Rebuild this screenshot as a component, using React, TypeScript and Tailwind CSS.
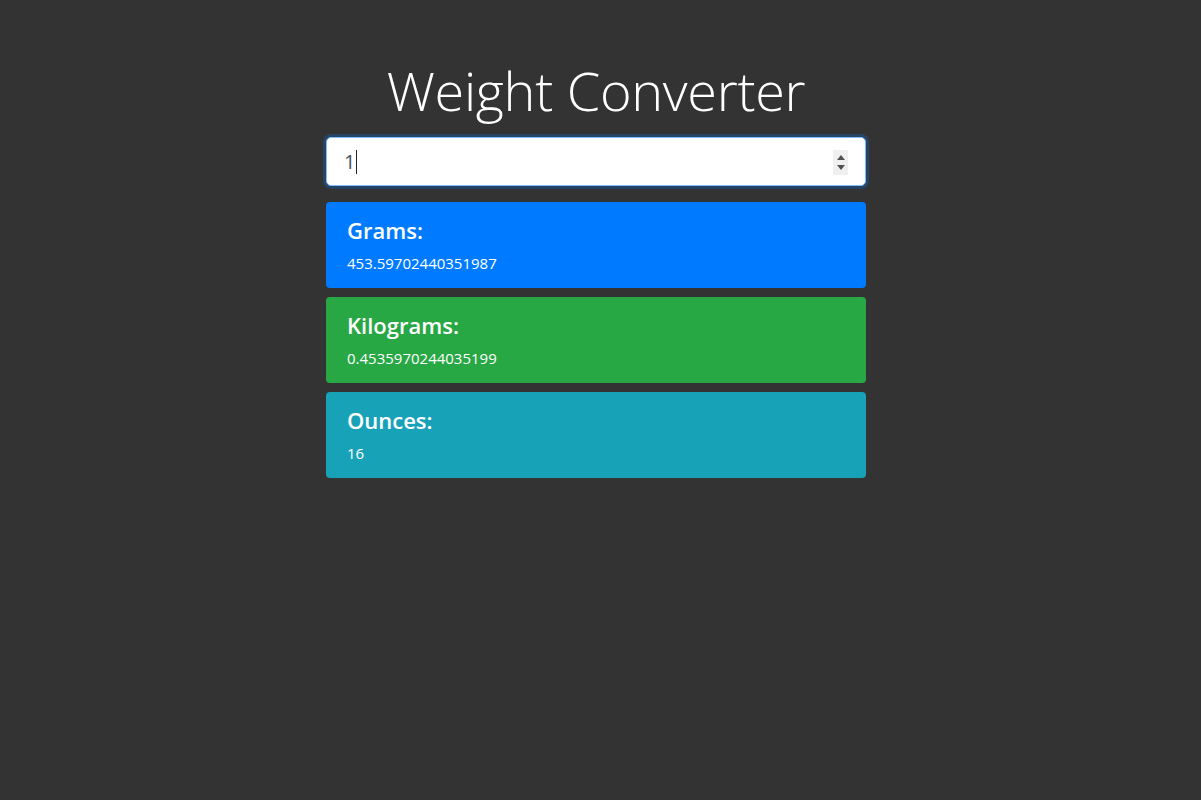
import React from 'react'

const results = [
  {label: 'Grams:', value: '453.59702440351987', bg: 'bg-[#007bff]'},
  {label: 'Kilograms:', value: '0.4535970244035199', bg: 'bg-[#28a745]'},
  {label: 'Ounces:', value: '16', bg: 'bg-[#17a2b8]'},
]

function Spinner() {
  return (
    <div className="absolute right-[17px] top-[12px] flex h-[25px] w-[15px] flex-col items-center justify-center gap-[5px] bg-[#f0f0f0]">
      <svg width="8" height="5" viewBox="0 0 8 5">
        <path d="M0 5 L4 0 L8 5 Z" fill="#505050" />
      </svg>
      <svg width="8" height="5" viewBox="0 0 8 5">
        <path d="M0 0 L4 5 L8 0 Z" fill="#505050" />
      </svg>
    </div>
  )
}

export default function App() {
  return (
    <div className="min-h-[800px] bg-[#333333] font-['Open_Sans','Noto_Sans',sans-serif] text-white">
      <div className="ml-[326px] w-[540px] pt-[56px]">
        <h1 className="mb-[12px] text-center text-[54px] font-light leading-[69px] tracking-[-0.3px]">
          Weight Converter
        </h1>
        <div className="relative mb-[16px] h-[49px] rounded-[5px] border border-[#80bdff] bg-white shadow-[0_0_0_3px_rgba(0,123,255,0.25)]">
          <div className="flex h-full items-center pl-[17px] text-[20px] text-[#495057]">
            <span>1</span>
            <span className="ml-[1px] h-[24px] w-px bg-[#222]" />
          </div>
          <Spinner />
        </div>
        <div className="flex flex-col gap-[9px]">
          {results.map((r) => (
            <div key={r.label} className={`${r.bg} rounded-[4px] px-[21px] py-[14px]`}>
              <h4 className="mb-[8px] text-[22px] font-semibold leading-[28px]">{r.label}</h4>
              <p className="text-[15px] leading-[22px]">{r.value}</p>
            </div>
          ))}
        </div>
      </div>
    </div>
  )
}
